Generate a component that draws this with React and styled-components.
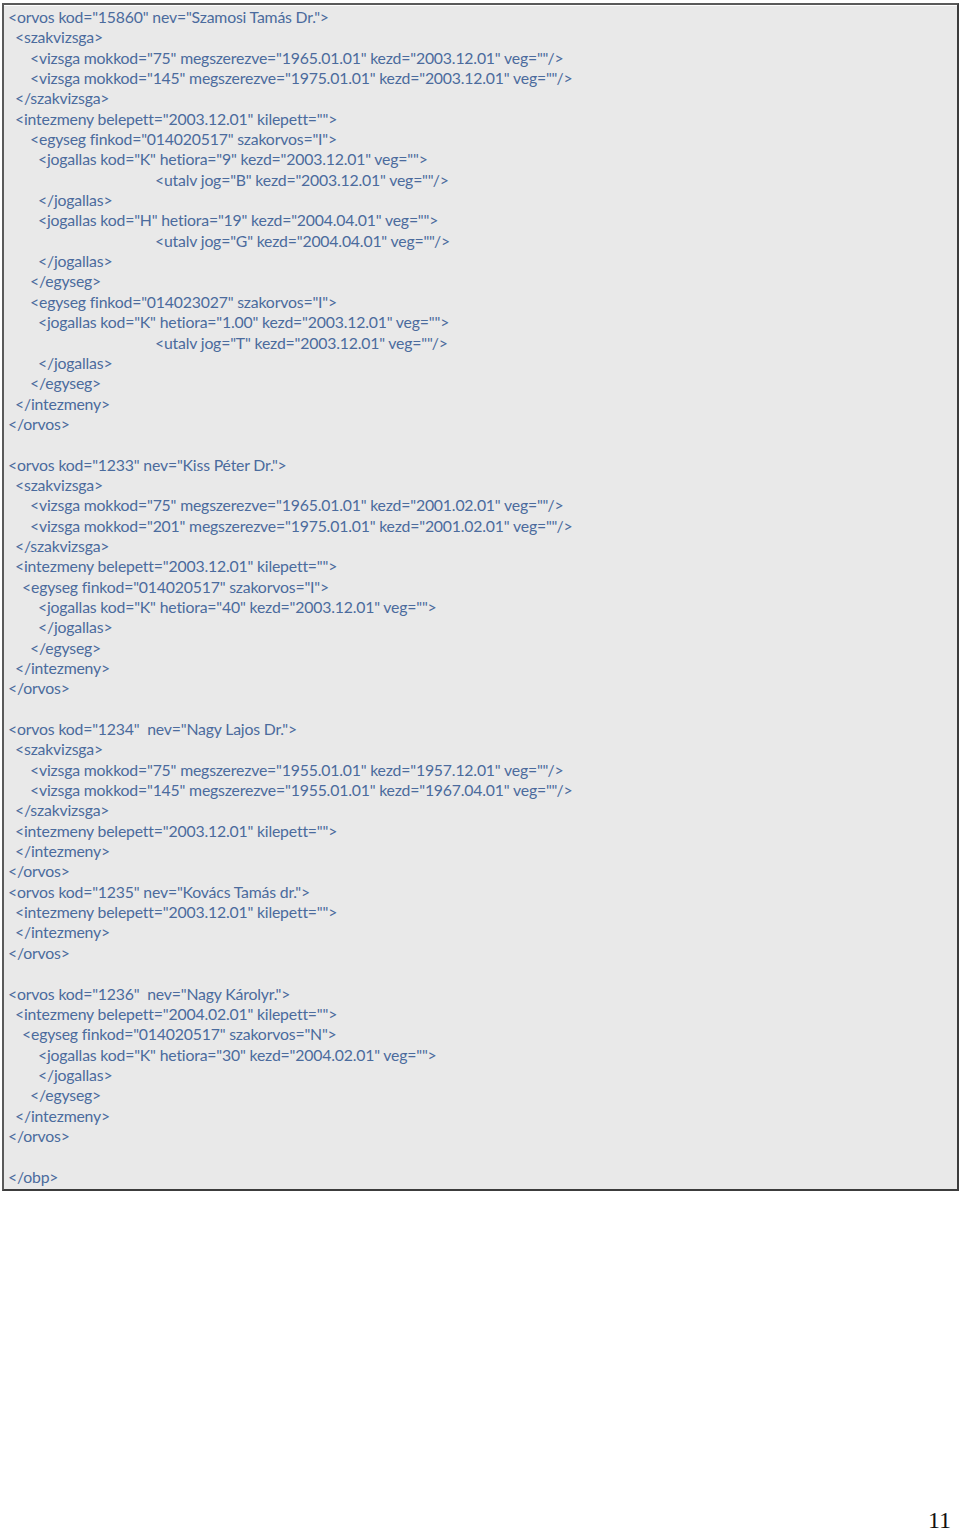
import React from 'react';
import styled, { createGlobalStyle } from 'styled-components';

const GlobalStyle = createGlobalStyle`
  html, body {
    margin: 0;
    padding: 0;
    background: #ffffff;
  }
`;

const Page = styled.div`
  display: flex;
  flex-direction: column;
  min-height: 1532px;
  width: 960px;
  box-sizing: border-box;
`;

const CodeBox = styled.div`
  margin: 3px 1px 0 2px;
  border: 2px solid #5a5a5a;
  border-right-color: #3c3c3c;
  border-bottom-color: #3c3c3c;
  background: #e9e9e9;
  padding: 2px 0 2px 0;
  box-shadow: inset 0 1px 0 #ffffff;
`;

const Line = styled.div`
  font-family: Lato, "Open Sans", "Liberation Sans", sans-serif;
  font-size: 15.8px;
  letter-spacing: -0.18px;
  line-height: 20.35px;
  height: 20.35px;
  color: #4b6b9d;
  white-space: pre;
  padding-left: ${p => p.$indent}px;
`;

const Footer = styled.div`
  margin-top: auto;
  display: flex;
  justify-content: flex-end;
  padding: 0 9px 0 0;
`;

const PageNumber = styled.span`
  font-family: "Liberation Serif", "Times New Roman", serif;
  font-size: 24px;
  line-height: 24px;
  color: #111111;
`;

const lines = [
  [4, '<orvos kod="15860" nev="Szamosi Tamás Dr.">'],
  [11, '<szakvizsga>'],
  [26, '<vizsga mokkod="75" megszerezve="1965.01.01" kezd="2003.12.01" veg=""/>'],
  [26, '<vizsga mokkod="145" megszerezve="1975.01.01" kezd="2003.12.01" veg=""/>'],
  [11, '</szakvizsga>'],
  [11, '<intezmeny belepett="2003.12.01" kilepett="">'],
  [26, '<egyseg finkod="014020517" szakorvos="I">'],
  [34, '<jogallas kod="K" hetiora="9" kezd="2003.12.01" veg="">'],
  [151, '<utalv jog="B" kezd="2003.12.01" veg=""/>'],
  [34, '</jogallas>'],
  [34, '<jogallas kod="H" hetiora="19" kezd="2004.04.01" veg="">'],
  [151, '<utalv jog="G" kezd="2004.04.01" veg=""/>'],
  [34, '</jogallas>'],
  [26, '</egyseg>'],
  [26, '<egyseg finkod="014023027" szakorvos="I">'],
  [34, '<jogallas kod="K" hetiora="1.00" kezd="2003.12.01" veg="">'],
  [151, '<utalv jog="T" kezd="2003.12.01" veg=""/>'],
  [34, '</jogallas>'],
  [26, '</egyseg>'],
  [11, '</intezmeny>'],
  [4, '</orvos>'],
  [4, ''],
  [4, '<orvos kod="1233" nev="Kiss Péter Dr.">'],
  [11, '<szakvizsga>'],
  [26, '<vizsga mokkod="75" megszerezve="1965.01.01" kezd="2001.02.01" veg=""/>'],
  [26, '<vizsga mokkod="201" megszerezve="1975.01.01" kezd="2001.02.01" veg=""/>'],
  [11, '</szakvizsga>'],
  [11, '<intezmeny belepett="2003.12.01" kilepett="">'],
  [18, '<egyseg finkod="014020517" szakorvos="I">'],
  [34, '<jogallas kod="K" hetiora="40" kezd="2003.12.01" veg="">'],
  [34, '</jogallas>'],
  [26, '</egyseg>'],
  [11, '</intezmeny>'],
  [4, '</orvos>'],
  [4, ''],
  [4, '<orvos kod="1234"  nev="Nagy Lajos Dr.">'],
  [11, '<szakvizsga>'],
  [26, '<vizsga mokkod="75" megszerezve="1955.01.01" kezd="1957.12.01" veg=""/>'],
  [26, '<vizsga mokkod="145" megszerezve="1955.01.01" kezd="1967.04.01" veg=""/>'],
  [11, '</szakvizsga>'],
  [11, '<intezmeny belepett="2003.12.01" kilepett="">'],
  [11, '</intezmeny>'],
  [4, '</orvos>'],
  [4, '<orvos kod="1235" nev="Kovács Tamás dr.">'],
  [11, '<intezmeny belepett="2003.12.01" kilepett="">'],
  [11, '</intezmeny>'],
  [4, '</orvos>'],
  [4, ''],
  [4, '<orvos kod="1236"  nev="Nagy Károlyr.">'],
  [11, '<intezmeny belepett="2004.02.01" kilepett="">'],
  [18, '<egyseg finkod="014020517" szakorvos="N">'],
  [34, '<jogallas kod="K" hetiora="30" kezd="2004.02.01" veg="">'],
  [34, '</jogallas>'],
  [26, '</egyseg>'],
  [11, '</intezmeny>'],
  [4, '</orvos>'],
  [4, ''],
  [4, '</obp>'],
];

const App = () => (
  <Page>
    <GlobalStyle />
    <CodeBox>
      {lines.map(([indent, text], i) => (
        <Line key={i} $indent={indent}>
          {text || '\u00a0'}
        </Line>
      ))}
    </CodeBox>
    <Footer>
      <PageNumber>11</PageNumber>
    </Footer>
  </Page>
);

export default App;
